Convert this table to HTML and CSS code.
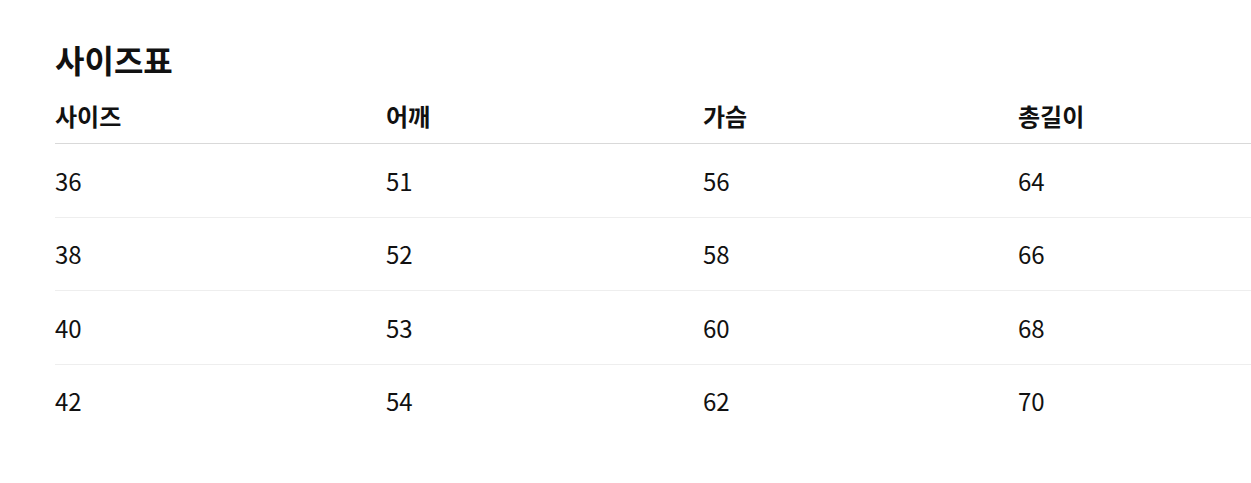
FILE: index.html
```html
<!DOCTYPE html>
<html lang="ko">
<head>
<meta charset="utf-8">
<link rel="stylesheet" href="styles.css">
</head>
<body>
<section class="size-chart">
  <h2 class="title">사이즈표</h2>
  <div class="table">
    <div class="row head">
      <div class="cell">사이즈</div><div class="cell">어깨</div><div class="cell">가슴</div><div class="cell">총길이</div>
    </div>
    <div class="row">
      <div class="cell">36</div><div class="cell">51</div><div class="cell">56</div><div class="cell">64</div>
    </div>
    <div class="row">
      <div class="cell">38</div><div class="cell">52</div><div class="cell">58</div><div class="cell">66</div>
    </div>
    <div class="row">
      <div class="cell">40</div><div class="cell">53</div><div class="cell">60</div><div class="cell">68</div>
    </div>
    <div class="row last">
      <div class="cell">42</div><div class="cell">54</div><div class="cell">62</div><div class="cell">70</div>
    </div>
  </div>
</section>
</body>
</html>
```

FILE: styles.css
```css
html, body {
  margin: 0;
  padding: 0;
  background: #fff;
}
body {
  font-family: "Noto Sans CJK KR", "Noto Sans", sans-serif;
  color: #111;
}
.size-chart {
  padding: 37px 0 0 55px;
}
.title {
  margin: 0;
  font-size: 32px;
  font-weight: 700;
  line-height: 44px;
}
.table {
  margin-top: 10.5px;
}
.row {
  display: grid;
  grid-template-columns: 331px 317px 315px 1fr;
  border-bottom: 1px solid #eeeeee;
  font-size: 24px;
  font-weight: 400;
  line-height: 31px;
  padding: 20.5px 0 21px;
}
.row.head {
  font-size: 24px;
  font-weight: 700;
  padding: 8px 0 12.5px;
  border-bottom: 1px solid #d9d9d9;
}
.row.last {
  border-bottom: none;
}
```
